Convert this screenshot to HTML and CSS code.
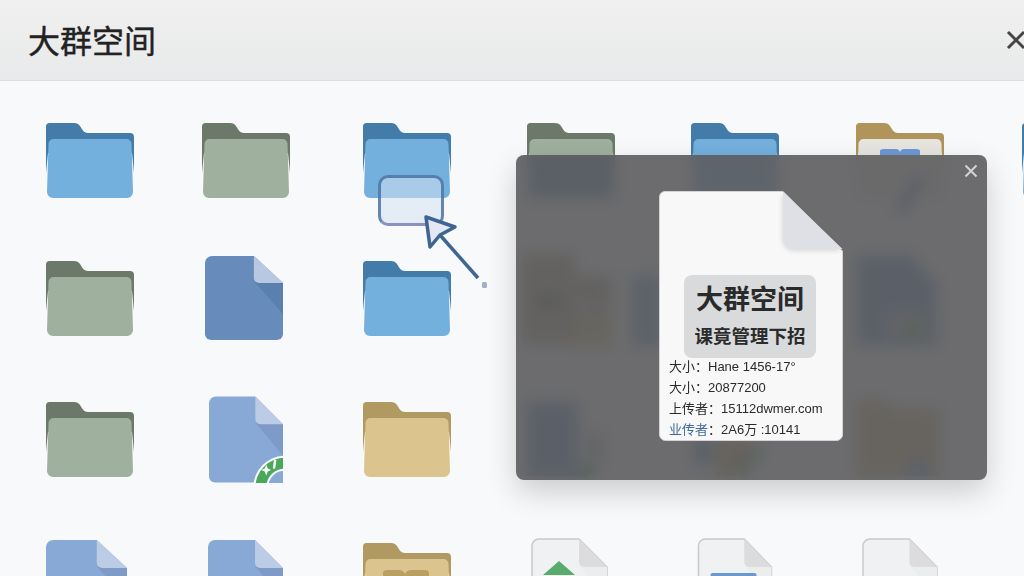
FILE: index.html
```html
<!DOCTYPE html>
<html lang="zh-CN">
<head>
  <meta charset="UTF-8" />
  <title>大群空间</title>
  <link rel="stylesheet" href="styles.css">
</head>
<body>

<svg class="sprite" aria-hidden="true">
  <symbol id="folder" viewBox="0 0 88 75" preserveAspectRatio="none">
    <path class="f-back" d="M0 3.500A3.500 3.500 0 0 1 3.500 0H28Q32 0 34 3L36.500 7Q38.500 10 42 10H84A4 4 0 0 1 88 14V50L86 30H2L0 50Z"/>
    <path class="f-front" d="M2.500 21A5 5 0 0 1 7.500 16H80.500A5 5 0 0 1 85.500 21L87 69A6 6 0 0 1 81 75H7A6 6 0 0 1 1 69Z"/>
  </symbol>
  <symbol id="doc" viewBox="0 0 75 87" preserveAspectRatio="none">
    <path class="d-body" d="M7 0H47L75 28V81A6 6 0 0 1 69 87H6A6 6 0 0 1 0 81V7A7 7 0 0 1 7 0Z"/>
    <path class="d-shade" d="M47 26L75 60V28Z"/>
    <path class="d-fold" d="M47 0L75 28H52A5 5 0 0 1 47 23Z"/>
  </symbol>
</svg>

<header class="topbar">
  <h1>大群空间</h1>
  <button class="close-btn" aria-label="关闭">
    <svg viewBox="0 0 20 20"><path d="M2 2L18 18M18 2L2 18"/></svg>
  </button>
</header>

<main class="space">
  <div class="row row-1">
    <div class="cell"><svg class="folder blue"><use href="#folder"/></svg></div>
    <div class="cell"><svg class="folder green"><use href="#folder"/></svg></div>
    <div class="cell drag-cell">
      <svg class="folder blue"><use href="#folder"/></svg>
      <div class="drag-box"></div>
      <svg class="pointer" viewBox="0 0 66 76">
        <path class="pointer-tail" d="M14 18L52 61"/>
        <path class="pointer-head" d="M0 0L29 10L14 18L4 30Z"/>
        <rect class="pointer-dot" x="56" y="65" width="5" height="6" rx="1.500"/>
      </svg>
    </div>
    <div class="cell">
      <svg class="folder green" viewBox="0 0 88 75">
        <use href="#folder" width="88" height="75"/>
        <rect x="1" y="34" width="86" height="41" fill="#5585a8"/>
      </svg>
    </div>
    <div class="cell"><svg class="folder blue"><use href="#folder"/></svg></div>
    <div class="cell">
      <svg class="folder tan-open" viewBox="0 0 88 90">
        <use href="#folder" width="88" height="75"/>
        <path class="hump" d="M24 32V28Q24 26 28 26H40Q43 26 44 29Q45 26 48 26H60Q64 26 64 28V32Z"/>
        <path class="pen" d="M64 57L44 86"/>
      </svg>
    </div>
    <div class="cell"><svg class="folder blue"><use href="#folder"/></svg></div>
  </div>

  <div class="row row-2">
    <div class="cell"><svg class="folder green"><use href="#folder"/></svg></div>
    <div class="cell"><svg class="doc doc-wide dark"><use href="#doc"/></svg></div>
    <div class="cell"><svg class="folder blue"><use href="#folder"/></svg></div>
    <div class="cell">
      <svg class="hidden-art" viewBox="0 0 135 95">
        <rect x="-4" y="-2" width="52" height="90" fill="#a89a70"/>
        <rect x="7" y="37" width="30" height="17" fill="#6a6a5c"/>
        <rect x="48" y="20" width="37" height="70" fill="#a59a78"/>
        <rect x="48" y="62" width="37" height="27" fill="#cfbc60"/>
        <rect x="52" y="47" width="11" height="9" fill="#e8e8f0"/>
        <rect x="72" y="47" width="8" height="9" fill="#e8e8f0"/>
        <rect x="105" y="20" width="30" height="70" fill="#5f9ac8"/>
      </svg>
    </div>
    <div class="cell"></div>
    <div class="cell">
      <svg class="hidden-art" viewBox="0 0 135 95">
        <path d="M1 -1H54L81 27V90H1Z" fill="#5585c0"/>
        <rect x="30" y="55" width="44" height="30" fill="#9aa3b0"/>
        <path d="M48 86L66 62" stroke="#4ba85b" stroke-width="10" fill="none"/>
      </svg>
    </div>
  </div>

  <div class="row row-3">
    <div class="cell"><svg class="folder green"><use href="#folder"/></svg></div>
    <div class="cell">
      <svg class="doc doc-narrow light" viewBox="0 0 75 87">
        <use href="#doc" width="75" height="87"/>
        <circle cx="77" cy="92" r="32" fill="#fff"/>
        <circle cx="77" cy="92" r="30" fill="#4ba85b"/>
        <circle cx="77" cy="92" r="19" fill="#fff"/>
        <circle cx="77" cy="92" r="17" fill="#88a8d6"/>
        <path d="M58 69L59.500 73L63 74.500L59.500 76L58 80L56.500 76L53 74.500L56.500 73Z" fill="#fff"/>
        <path d="M67 65L66 72" stroke="#fff" stroke-width="2.500" stroke-linecap="round"/>
      </svg>
    </div>
    <div class="cell"><svg class="folder tan"><use href="#folder"/></svg></div>
    <div class="cell">
      <svg class="hidden-art" viewBox="0 0 135 95">
        <rect x="-1" y="6" width="52" height="74" fill="#5585c0"/>
        <rect x="58" y="34" width="18" height="38" fill="#c8cad0"/>
        <rect x="62" y="45" width="8" height="12" fill="#7388a8"/>
        <ellipse cx="60" cy="74" rx="11" ry="6" transform="rotate(-25 60 74)" fill="#3f9a4c"/>
      </svg>
    </div>
    <div class="cell">
      <svg class="hidden-art" viewBox="0 0 135 95">
        <rect x="2" y="40" width="20" height="30" fill="#5f9ac8"/>
        <rect x="24" y="44" width="22" height="36" fill="#c8a858"/>
        <rect x="46" y="44" width="12" height="30" fill="#c07850"/>
        <path d="M48 78L72 50" stroke="#4ba85b" stroke-width="9" fill="none"/>
      </svg>
    </div>
    <div class="cell">
      <svg class="hidden-art" viewBox="0 0 135 95">
        <path d="M0 4H30L38 13H84V80H0Z" fill="#cdb06a"/>
        <path d="M62 57L78 80H46Z" fill="#5f90c0"/>
      </svg>
    </div>
  </div>

  <div class="row row-4">
    <div class="cell"><svg class="doc doc-first light"><use href="#doc"/></svg></div>
    <div class="cell"><svg class="doc doc-second light"><use href="#doc"/></svg></div>
    <div class="cell">
      <svg class="folder tan-box" viewBox="0 0 88 75">
        <use href="#folder" width="88" height="75"/>
        <path class="box" d="M20 33V30Q20 27 24 27H36Q40 27 42 31Q44 27 48 27H62Q66 27 66 30V33Z"/>
      </svg>
    </div>
    <div class="cell">
      <svg class="doc doc-gray-a gray" viewBox="0 0 75 87">
        <use href="#doc" width="75" height="87"/>
        <path d="M27 22L43 36H11Z" fill="#58ab6c"/>
      </svg>
    </div>
    <div class="cell">
      <svg class="doc doc-gray-b gray" viewBox="0 0 73 87">
        <use href="#doc" width="73" height="87"/>
        <rect x="12" y="34" width="46" height="30" rx="2" fill="#6a99cf"/>
      </svg>
    </div>
    <div class="cell"><svg class="doc doc-gray-b gray"><use href="#doc"/></svg></div>
  </div>
</main>

<section class="preview">
  <button class="preview-close" aria-label="关闭">
    <svg viewBox="0 0 14 14"><path d="M1.500 1.500L12.500 12.500M12.500 1.500L1.500 12.500"/></svg>
  </button>
  <div class="sheet">
    <svg class="sheet-bg" viewBox="0 0 184 250">
      <path class="sheet-body" d="M6 .5H124L183.500 60V243A6 6 0 0 1 177.500 249.500H6.500A6 6 0 0 1 .5 243V6A6 6 0 0 1 6 .5Z"/>
      <path class="sheet-fold" d="M124 .5L183.500 58H136A12 12 0 0 1 124 46Z"/>
    </svg>
    <div class="sheet-label">
      <div class="sheet-title">大群空间</div>
      <div class="sheet-sub">课竟管理下招</div>
    </div>
    <ul class="sheet-meta">
      <li>大小：Hane 1456-17°</li>
      <li>大小：20877200</li>
      <li>上传者：15112dwmer.com</li>
      <li><span class="meta-blue">业传者</span>：2A6万 :10141</li>
    </ul>
  </div>
</section>

</body>
</html>
```

FILE: styles.css
```css
* { box-sizing: border-box; }
html, body { margin: 0; height: 100%; }
body {
  position: relative;
  width: 1024px; height: 576px;
  overflow: hidden;
  background: #f8f9fa;
  color: #222;
  font-family: "Liberation Sans", "Noto Sans CJK SC", sans-serif;
}
svg { display: block; }
symbol { overflow: visible; }
.sprite { position: absolute; width: 0; height: 0; }

/* header */
.topbar {
  height: 81px;
  padding: 0 0 0 28px;
  display: flex; align-items: center; justify-content: space-between;
  background: linear-gradient(#f0f0f0, #e8e9ea);
  border-bottom: 1px solid #dddedf;
}
.topbar h1 {
  margin: 0 0 2px;
  font-size: 32px; font-weight: 400; line-height: 40px;
  -webkit-text-stroke: 0.4px #222;
  font-family: "Noto Sans CJK SC", sans-serif;
  color: #222;
}
.close-btn {
  width: 19px; height: 20px; padding: 0;
  margin-right: 0; border: none; background: none;
  overflow: hidden; flex: none;
}
.close-btn svg { width: 22px; height: 20px; }
.close-btn path { stroke: #444; stroke-width: 3; fill: none; }

/* icon rows */
.space { padding: 42px 0 0 46px; height: 495px; overflow: hidden; }
.row {
  display: grid;
  grid-template-columns: 155px 162px 164px 164px 165px 166px 164px;
  width: 1140px;
}
.row-1 { height: 133px; }
.row-2 { height: 140px; }
.row-3 { height: 143px; }
.row-4 { height: 100px; }
.cell { position: relative; }

.folder { width: 88px; height: 75px; }
.row-2 .folder { margin-top: 5px; }
.row-3 .folder { margin-top: 6px; }
.row-4 .folder { margin-top: 4px; }
.cell:nth-child(2) > .folder { margin-left: 1px; }

.f-back { fill: var(--back); }
.f-front { fill: var(--front); }
.blue { --back: #437ca9; --front: #74b0de; }
.green { --back: #6c796a; --front: #9fb09e; }
.tan { --back: #b09a62; --front: #dbc48d; }
.tan-open { --back: #b0945a; --front: #e6e5df; height: 90px; overflow: visible; }
.tan-box { --back: #b09a62; --front: #dcc48e; }
.hump { fill: #6d98d6; }
.pen { stroke: #3f62a8; stroke-width: 8; stroke-linecap: round; fill: none; }
.box { fill: #b99f62; }

.doc { height: 87px; }
.d-body { fill: var(--body); stroke: var(--edge, none); stroke-width: 1.5; }
.d-shade { fill: var(--shade); }
.d-fold { fill: var(--fold); }
.dark { --body: #678cbb; --shade: #5a80ad; --fold: #b8c8e2; }
.light { --body: #88a8d6; --shade: #7e9ac6; --fold: #bccce6; }
.gray { --body: #f0f1f2; --edge: #c8c9cb; --shade: #eceded; --fold: #dcdcde; overflow: visible; }

.doc-wide { width: 78px; height: 84px; margin-left: 4px; }
.doc-narrow { width: 74px; margin-left: 8px; }
.doc-first { width: 81px; margin-top: 1px; }
.doc-second { width: 75px; margin: 1px 0 0 7px; }
.doc-gray-a { width: 75px; margin-left: 5px; }
.doc-gray-b { width: 74px; margin-left: 7px; }

/* art that sits behind the preview panel */
.hidden-art { width: 135px; height: 95px; overflow: visible; }

/* dragged item */
.drag-box {
  position: absolute; left: 15px; top: 52px;
  width: 66px; height: 51px;
  background: rgba(211, 225, 243, 0.55);
  border: 3px solid rgba(68, 108, 158, 0.8);
  border-bottom-color: #8a92bf;
  border-radius: 10px;
}
.pointer {
  position: absolute; left: 63px; top: 94px;
  width: 66px; height: 76px;
  overflow: visible;
}
.pointer-head { fill: #e5e8f2; stroke: #3f6690; stroke-width: 3.5; stroke-linejoin: round; }
.pointer-tail { stroke: #3f6690; stroke-width: 3.5; fill: none; }
.pointer-dot { fill: #9fb0c8; }

/* preview panel */
.preview {
  position: absolute; left: 516px; top: 155px;
  width: 471px; height: 325px;
  padding: 36px 1px 0 0;
  display: flex; justify-content: center; align-items: flex-start;
  background: rgba(92, 92, 94, 0.9);
  backdrop-filter: blur(7px);
  border-radius: 8px;
  box-shadow: 0 12px 30px rgba(0, 0, 0, 0.18);
}
.preview-close {
  position: absolute; right: 9px; top: 9px;
  width: 14px; height: 14px; padding: 0;
  border: none; background: none;
}
.preview-close path { stroke: #d4d4d4; stroke-width: 2; fill: none; }

.sheet {
  position: relative;
  width: 184px; height: 250px;
  padding: 84px 10px 0;
}
.sheet-bg { position: absolute; left: 0; top: 0; width: 184px; height: 250px; overflow: visible; }
.sheet-body { fill: #f8f8f9; stroke: #d4d4d6; }
.sheet-fold { fill: #dfe0e6; filter: drop-shadow(-1px 2px 2px rgba(0, 0, 0, 0.12)); }
.sheet-label {
  position: relative;
  width: 132px; height: 83px;
  margin: 0 0 0 15px; padding-top: 5px;
  background: #d9dadb;
  border-radius: 8px;
  text-align: center;
  font-family: "Noto Sans CJK SC", sans-serif;
}
.sheet-title { font-size: 27px; font-weight: 700; line-height: 36px; color: #2a2a2a; }
.sheet-sub { font-size: 18.5px; font-weight: 700; line-height: 28px; margin-top: 5px; color: #2c2c2c; white-space: nowrap; }
.sheet-meta {
  position: relative;
  list-style: none;
  margin: -2px 0 0; padding: 0;
  font-size: 13px; line-height: 21px;
  color: #2a2a2a; white-space: nowrap;
}
.meta-blue { color: #3c6a9c; }
```
